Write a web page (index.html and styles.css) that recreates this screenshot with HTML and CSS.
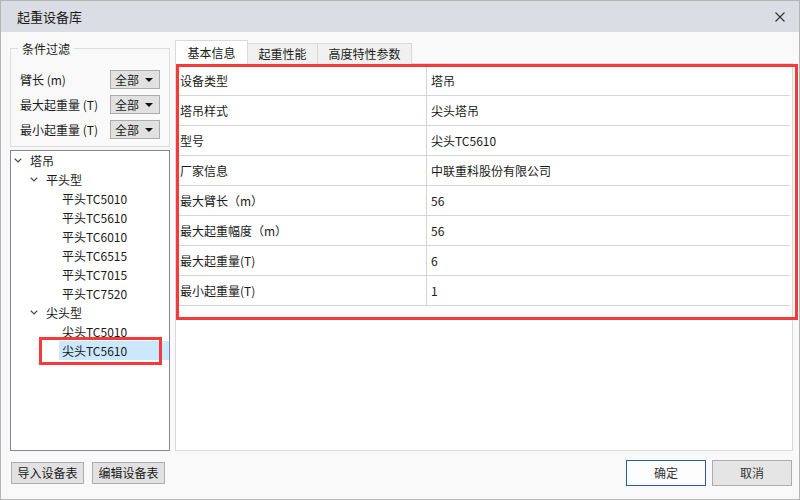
FILE: index.html
```html
<!DOCTYPE html>
<html lang="zh-CN">
<head>
<meta charset="utf-8">
<title>起重设备库</title>
<link rel="stylesheet" href="styles.css">
</head>
<body>
<div class="window">
  <div class="titlebar">
    <span class="title">起重设备库</span>
    <span class="close">
      <svg width="10" height="10" viewBox="0 0 10 10"><path d="M0.5 0.5 L9.5 9.5 M9.5 0.5 L0.5 9.5" stroke="#333" stroke-width="1.1" fill="none"/></svg>
    </span>
  </div>
  <div class="main">
    <div class="left">
      <div class="group">
        <span class="group-title">条件过滤</span>
        <div class="frow"><span class="flabel">臂长 (m)</span><span class="select"><span>全部</span><i class="arrow"></i></span></div>
        <div class="frow"><span class="flabel">最大起重量 (T)</span><span class="select"><span>全部</span><i class="arrow"></i></span></div>
        <div class="frow"><span class="flabel">最小起重量 (T)</span><span class="select"><span>全部</span><i class="arrow"></i></span></div>
      </div>
      <div class="tree">
        <div class="node l1"><span class="chev"><svg width="8" height="5" viewBox="0 0 8 5"><polyline points="0.7,0.7 4,4 7.3,0.7" stroke="#444" stroke-width="1.2" fill="none"/></svg></span><span class="ntext">塔吊</span></div>
        <div class="node l2"><span class="chev"><svg width="8" height="5" viewBox="0 0 8 5"><polyline points="0.7,0.7 4,4 7.3,0.7" stroke="#444" stroke-width="1.2" fill="none"/></svg></span><span class="ntext">平头型</span></div>
        <div class="node l3"><span class="leaf">平头TC5010</span></div>
        <div class="node l3"><span class="leaf">平头TC5610</span></div>
        <div class="node l3"><span class="leaf">平头TC6010</span></div>
        <div class="node l3"><span class="leaf">平头TC6515</span></div>
        <div class="node l3"><span class="leaf">平头TC7015</span></div>
        <div class="node l3"><span class="leaf">平头TC7520</span></div>
        <div class="node l2"><span class="chev"><svg width="8" height="5" viewBox="0 0 8 5"><polyline points="0.7,0.7 4,4 7.3,0.7" stroke="#444" stroke-width="1.2" fill="none"/></svg></span><span class="ntext">尖头型</span></div>
        <div class="node l3"><span class="leaf">尖头TC5010</span></div>
        <div class="node l3"><span class="leaf selected">尖头TC5610</span></div>
      </div>
    </div>
    <div class="right">
      <div class="tabs">
        <div class="tab active t1">基本信息</div>
        <div class="tab t2">起重性能</div>
        <div class="tab t3">高度特性参数</div>
      </div>
      <div class="panel">
        <div class="table">
          <div class="row"><div class="k">设备类型</div><div class="v">塔吊</div></div>
          <div class="row"><div class="k">塔吊样式</div><div class="v">尖头塔吊</div></div>
          <div class="row"><div class="k">型号</div><div class="v">尖头TC5610</div></div>
          <div class="row"><div class="k">厂家信息</div><div class="v">中联重科股份有限公司</div></div>
          <div class="row"><div class="k">最大臂长（m）</div><div class="v">56</div></div>
          <div class="row"><div class="k">最大起重幅度（m）</div><div class="v">56</div></div>
          <div class="row"><div class="k">最大起重量(T)</div><div class="v">6</div></div>
          <div class="row"><div class="k">最小起重量(T)</div><div class="v">1</div></div>
        </div>
      </div>
    </div>
  </div>
  <div class="bottombar">
    <div class="lbtns">
      <button class="btn">导入设备表</button>
      <button class="btn">编辑设备表</button>
    </div>
    <div class="rbtns">
      <button class="btn big ok">确定</button>
      <button class="btn big">取消</button>
    </div>
  </div>
  <div class="mark mark-table"></div>
  <div class="mark mark-tree"></div>
</div>
</body>
</html>
```

FILE: styles.css
```css
* { box-sizing: border-box; }
html, body { margin: 0; padding: 0; }
body {
  font-family: "Noto Sans CJK SC", "Noto Sans", sans-serif;
  font-size: 12px;
  color: #1a1a1a;
  background: #ffffff;
}
.window {
  position: relative;
  width: 800px;
  height: 500px;
  border: 1px solid #b4b4b4;
  background: #f9f9f9;
  display: flex;
  flex-direction: column;
  overflow: hidden;
}
.titlebar {
  height: 31px;
  flex: none;
  background: #dadde3;
  display: flex;
  align-items: center;
  justify-content: space-between;
  padding: 0 14px 0 16px;
}
.title { font-size: 13px; line-height: 16px; color: #1b1b1b; }
.close { display: flex; width: 10px; height: 10px; }

.main {
  height: 420px;
  flex: none;
  display: flex;
  gap: 5px;
  padding: 8px 6px 0 9px;
}
.left { width: 160px; flex: none; display: flex; flex-direction: column; }
.group {
  position: relative;
  margin-top: 8px;
  height: 99px;
  border: 1px solid #dcdcdc;
  padding: 21px 9px 0 9px;
  display: flex;
  flex-direction: column;
  gap: 6px;
}
.group-title {
  position: absolute;
  top: -8px;
  left: 7px;
  padding: 0 4px;
  background: #f9f9f9;
  line-height: 16px;
  font-size: 12px;
}
.frow { display: flex; justify-content: space-between; align-items: center; height: 19px; }
.flabel { line-height: 16px; }
.select {
  width: 50px;
  height: 19px;
  background: #e1e1e1;
  border: 1px solid #adadad;
  display: flex;
  align-items: center;
  justify-content: space-between;
  padding: 0 6px 0 4px;
  line-height: 16px;
}
.arrow {
  width: 0; height: 0;
  border-left: 4px solid transparent;
  border-right: 4px solid transparent;
  border-top: 4px solid #111;
}
.tree {
  margin-top: 3px;
  height: 301px;
  border: 1px solid #828790;
  background: #ffffff;
  padding-top: 0;
}
.node { height: 19px; display: flex; align-items: center; line-height: 19px; }
.node.l1 { padding-left: 1px; }
.node.l2 { padding-left: 17px; }
.node.l3 { padding-left: 48px; }
.chev { width: 12px; display: flex; justify-content: center; align-items: center; }
.ntext { margin-left: 6px; }
.leaf { flex: 1; padding-left: 3px; height: 19px; }
.leaf.selected { background: #cce8ff; }

.right { flex: 1; display: flex; flex-direction: column; }
.tabs { height: 24px; display: flex; align-items: flex-end; position: relative; z-index: 1; }
.tab {
  height: 21px;
  border: 1px solid #d9d9d9;
  border-bottom: none;
  background: #f0f0f0;
  text-align: center;
  line-height: 20px;
  margin-left: -1px;
}
.tab.active { height: 24px; background: #ffffff; margin-left: 0; line-height: 24px; }
.t1 { width: 73px; }
.t2 { width: 71px; }
.t3 { width: 95px; }
.panel {
  flex: 1;
  margin-top: -1px;
  margin-bottom: 1px;
  border: 1px solid #d9d9d9;
  background: #ffffff;
  padding: 2px 2px 0 0;
}
.row {
  display: grid;
  grid-template-columns: 251px 1fr;
  height: 30px;
  border-bottom: 1px solid #d5d5d5;
}
.k { border-right: 1px solid #d5d5d5; padding-left: 4px; line-height: 29px; }
.v { padding-left: 4px; line-height: 29px; }

.bottombar {
  flex: 1;
  display: flex;
  justify-content: space-between;
  align-items: flex-start;
  padding: 8px 7px 0 10px;
}
.lbtns { display: flex; gap: 8px; margin-top: 2px; }
.rbtns { display: flex; gap: 6px; }
.btn {
  font-family: "Noto Sans CJK SC", "Noto Sans", sans-serif;
  font-size: 12px;
  color: #1a1a1a;
  background: #e1e1e1;
  border: 1px solid #adadad;
  height: 22px;
  width: 73px;
  padding: 0;
  line-height: 20px;
  margin: 0;
}
.btn.big { width: 80px; height: 26px; line-height: 24px; background: #e5e5e5; color: #333; }
.btn.big.ok { background: #fdfdfd; border-color: #2a5a9a; }

.mark { position: absolute; border: 3px solid #f53a3a; pointer-events: none; }
.mark-table { left: 175px; top: 63px; width: 622px; height: 256px; }
.mark-tree { left: 38px; top: 336px; width: 123px; height: 28px; }
```
